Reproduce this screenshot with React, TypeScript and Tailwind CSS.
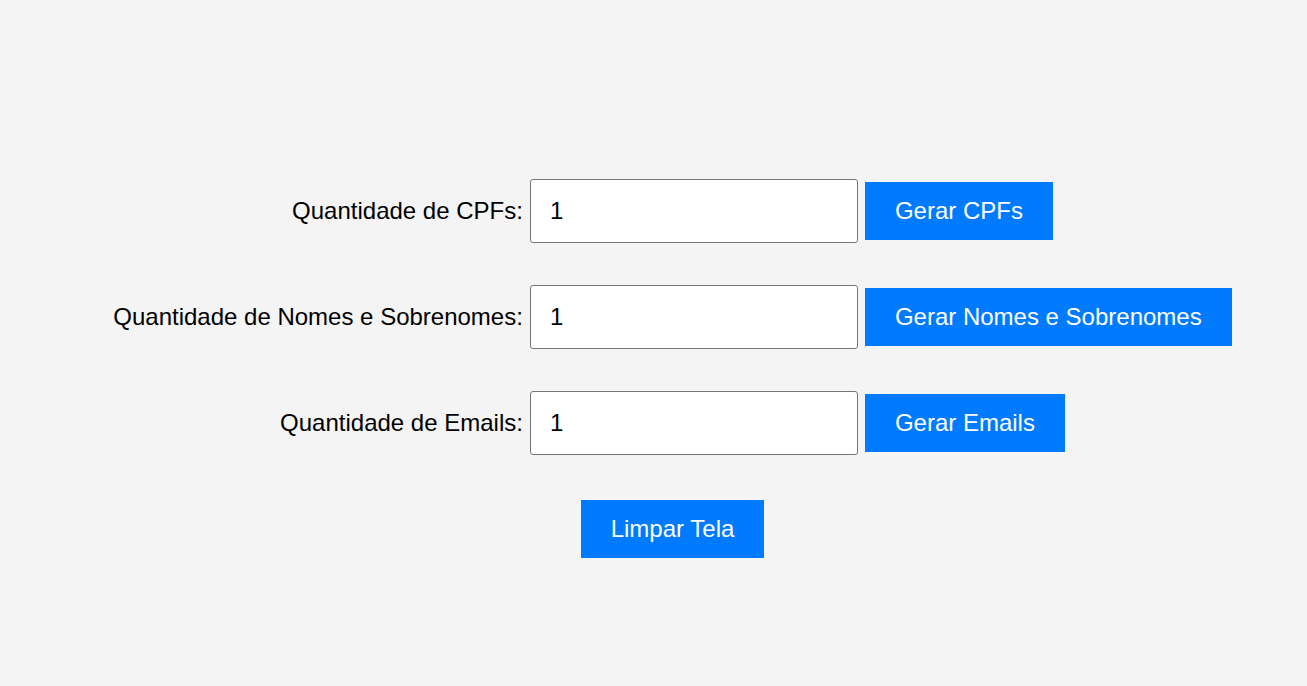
import React from "react";

const rows = [
  { label: "Quantidade de CPFs:", button: "Gerar CPFs" },
  { label: "Quantidade de Nomes e Sobrenomes:", button: "Gerar Nomes e Sobrenomes" },
  { label: "Quantidade de Emails:", button: "Gerar Emails" },
];

export default function App() {
  return (
    <div
      className="min-h-[686px] w-full bg-[#f4f4f4] text-[24px] text-black pl-[38px] pt-[179px]"
      style={{ fontFamily: '"Liberation Sans", Arial, sans-serif' }}
    >
      <div className="flex flex-col items-center gap-[42px]">
        {rows.map((r) => (
          <div key={r.label} className="flex items-center h-[64px] gap-[7px]">
            <label className="leading-[28px]">{r.label}</label>
            <input
              type="number"
              defaultValue={1}
              className="w-[328px] h-[64px] border border-[#767676] rounded-[3px] bg-white px-[19px] text-[24px] text-black outline-none [appearance:textfield]"
            />
            <button className="h-[58px] px-[30px] bg-[#007bff] text-white text-[24px] leading-[28px]">
              {r.button}
            </button>
          </div>
        ))}
        <div className="flex items-center h-[64px]">
          <button className="h-[58px] px-[30px] bg-[#007bff] text-white text-[24px] leading-[28px]">
            Limpar Tela
          </button>
        </div>
      </div>
    </div>
  );
}
